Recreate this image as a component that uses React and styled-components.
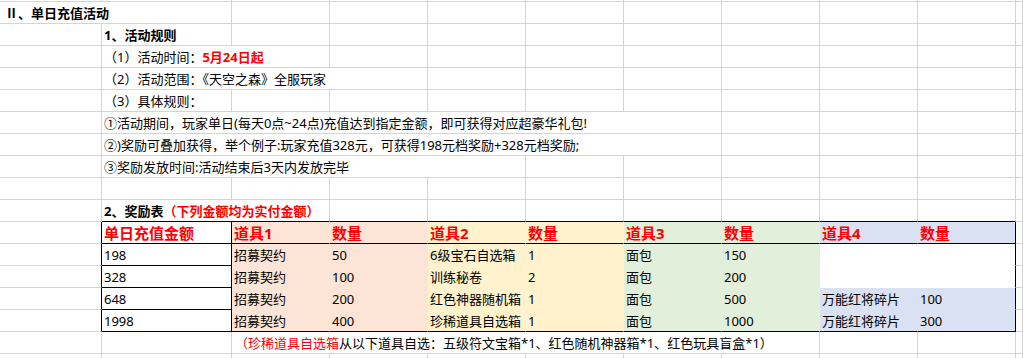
import styled, { createGlobalStyle } from 'styled-components';

const GRID = '#d4d4d4';
const INK = '#000';
const RED = '#ff0000';
const CLEAR = 'transparent';

const PEACH = '#fce4d6';
const YELLOW = '#fff2cc';
const GREEN = '#e2efda';
const BLUE = '#d9e1f2';

const GlobalStyle = createGlobalStyle`
  html, body {
    margin: 0;
    padding: 0;
    background: #fff;
    overflow: hidden;
  }
  body {
    font-family: "Noto Sans", "Noto Sans CJK SC", sans-serif;
  }
`;

const Sheet = styled.div`
  width: 1023px;
  height: 358px;
  overflow: hidden;
`;

const Row = styled.div`
  display: grid;
  grid-template-columns: 102px 130px repeat(8, 98px) 1fr;
  height: ${props => props.$h || 22}px;
`;

const Cell = styled.div`
  grid-column: span ${props => props.$span || 1};
  box-sizing: border-box;
  display: flex;
  align-items: center;
  min-width: 0;
  padding-left: ${props => (props.$pl != null ? props.$pl : 2)}px;
  border-right: 1px solid ${props => props.$r || GRID};
  border-bottom: 1px solid ${props => props.$b || GRID};
  background: ${props => props.$bg || '#fff'};
  white-space: nowrap;
  overflow: hidden;
  font-size: ${props => (props.$head ? 15 : 13)}px;
  font-weight: ${props => (props.$head || props.$bold ? 700 : 400)};
  color: ${props => (props.$head ? RED : '#000')};
`;

const Red = styled.span`
  color: ${RED};
  font-weight: ${props => (props.$bold ? 700 : 400)};
`;

const Numeral = styled.span`
  font-family: "Noto Sans CJK SC", sans-serif;
`;

const blanks = (n, props = {}) =>
  Array.from({ length: n }, (_, i) => <Cell key={`b${i}`} {...props} />);

const groups = [
  { title: '道具1', bg: PEACH },
  { title: '道具2', bg: YELLOW },
  { title: '道具3', bg: GREEN },
  { title: '道具4', bg: BLUE },
];

const rewards = [
  { amount: '198', items: [['招募契约', '50'], ['6级宝石自选箱', '1'], ['面包', '150'], null] },
  { amount: '328', items: [['招募契约', '100'], ['训练秘卷', '2'], ['面包', '200'], null] },
  { amount: '648', items: [['招募契约', '200'], ['红色神器随机箱', '1'], ['面包', '500'], ['万能红将碎片', '100']] },
  { amount: '1998', items: [['招募契约', '400'], ['珍稀道具自选箱', '1'], ['面包', '1000'], ['万能红将碎片', '300']] },
];

const HeaderRow = () => (
  <Row>
    <Cell $r={INK} />
    <Cell $head $r={INK} $b={INK}>单日充值金额</Cell>
    {groups.map((g, i) => [
      <Cell key={`t${i}`} $head $bg={g.bg} $r={CLEAR} $b={INK}>{g.title}</Cell>,
      <Cell key={`q${i}`} $head $bg={g.bg} $r={i === 3 ? INK : CLEAR} $b={INK}>数量</Cell>,
    ])}
    <Cell />
  </Row>
);

const RewardRow = ({ reward, last }) => {
  const bottom = last ? INK : CLEAR;
  return (
    <Row>
      <Cell $r={INK} />
      <Cell $r={INK} $b={INK}>{reward.amount}</Cell>
      {groups.map((g, i) => {
        const item = reward.items[i];
        const bg = item ? g.bg : '#fff';
        return [
          <Cell key={`n${i}`} $bg={bg} $r={CLEAR} $b={bottom}>{item && item[0]}</Cell>,
          <Cell key={`c${i}`} $bg={bg} $r={i === 3 ? INK : CLEAR} $b={bottom}>{item && item[1]}</Cell>,
        ];
      })}
      <Cell />
    </Row>
  );
};

const App = () => (
  <>
    <GlobalStyle />
    <Sheet>
      <Row $h={2}>{blanks(11)}</Row>

      <Row>
        <Cell $span={2} $bold $pl={5}><Numeral>Ⅱ</Numeral>、单日充值活动</Cell>
        {blanks(9)}
      </Row>

      <Row>
        <Cell />
        <Cell $bold>1、活动规则</Cell>
        {blanks(9)}
      </Row>

      <Row>
        <Cell />
        <Cell $span={2}>
          （1）活动时间：<Red $bold>5月24日起</Red>
        </Cell>
        {blanks(8)}
      </Row>

      <Row>
        <Cell />
        <Cell $span={3}>（2）活动范围：《天空之森》全服玩家</Cell>
        {blanks(7)}
      </Row>

      <Row>
        <Cell />
        <Cell>（3）具体规则：</Cell>
        {blanks(9)}
      </Row>

      <Row>
        <Cell />
        <Cell $span={6}>①活动期间，玩家单日(每天0点~24点)充值达到指定金额，即可获得对应超豪华礼包!</Cell>
        {blanks(4)}
      </Row>

      <Row>
        <Cell />
        <Cell $span={6}>②)奖励可叠加获得，举个例子:玩家充值328元，可获得198元档奖励+328元档奖励;</Cell>
        {blanks(4)}
      </Row>

      <Row>
        <Cell />
        <Cell $span={4}>③奖励发放时间:活动结束后3天内发放完毕</Cell>
        {blanks(6)}
      </Row>

      <Row>{blanks(11)}</Row>

      <Row>
        <Cell />
        <Cell $span={2} $bold $b={INK}>
          2、奖励表<Red $bold>（下列金额均为实付金额）</Red>
        </Cell>
        {blanks(7, { $b: INK })}
        <Cell />
      </Row>

      <HeaderRow />
      {rewards.map((r, i) => (
        <RewardRow key={r.amount} reward={r} last={i === rewards.length - 1} />
      ))}

      <Row>
        <Cell />
        <Cell />
        <Cell $span={6} $pl={3}>
          <Red>（珍稀道具自选箱</Red>从以下道具自选：五级符文宝箱*1、红色随机神器箱*1、红色玩具盲盒*1）
        </Cell>
        {blanks(3)}
      </Row>

      <Row>{blanks(11)}</Row>
    </Sheet>
  </>
);

export default App;
